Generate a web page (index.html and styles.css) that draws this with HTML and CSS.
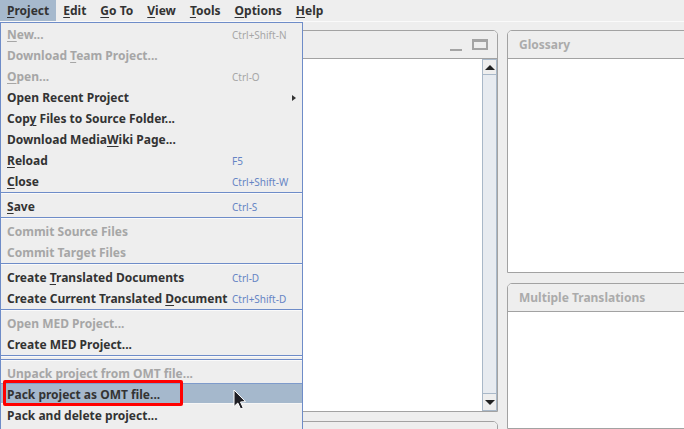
FILE: index.html
```html
<!DOCTYPE html>
<html>
<head>
<meta charset="utf-8">
<title>OmegaT</title>
<link rel="stylesheet" href="styles.css">
</head>
<body>
<div class="app">
  <nav class="menubar">
    <span class="mb-item active"><u>P</u>roject</span>
    <span class="mb-item"><u>E</u>dit</span>
    <span class="mb-item"><u>G</u>o To</span>
    <span class="mb-item"><u>V</u>iew</span>
    <span class="mb-item"><u>T</u>ools</span>
    <span class="mb-item"><u>O</u>ptions</span>
    <span class="mb-item"><u>H</u>elp</span>
  </nav>

  <main class="workspace">
    <div class="col-left">
      <section class="panel editor">
        <header class="panel-head">
          <span class="win-btns">
            <span class="btn-min"></span>
            <span class="btn-max"></span>
          </span>
        </header>
        <div class="panel-body editor-body">
          <div class="editor-text"></div>
          <div class="scrollbar">
            <div class="sb-btn"><span class="tri-up"></span></div>
            <div class="sb-track"></div>
            <div class="sb-btn"><span class="tri-down"></span></div>
          </div>
        </div>
      </section>
      <section class="panel bottom-panel">
        <header class="panel-head"></header>
      </section>
    </div>
    <div class="col-right">
      <section class="panel glossary">
        <header class="panel-head"><span class="panel-title">Glossary</span></header>
        <div class="panel-body"></div>
      </section>
      <section class="panel multi">
        <header class="panel-head"><span class="panel-title">Multiple Translations</span></header>
        <div class="panel-body"></div>
      </section>
    </div>
  </main>

  <div class="popup">
    <div class="mi dis"><span class="lbl"><u>N</u>ew...</span><span class="sc">Ctrl+Shift-N</span></div>
    <div class="mi dis"><span class="lbl">Download <u>T</u>eam Project...</span></div>
    <div class="mi dis"><span class="lbl"><u>O</u>pen...</span><span class="sc">Ctrl-O</span></div>
    <div class="mi"><span class="lbl">Open Recent Project</span><span class="arrow"></span></div>
    <div class="mi"><span class="lbl">Cop<u>y</u> Files to Source Folder...</span></div>
    <div class="mi"><span class="lbl">Download Media<u>W</u>iki Page...</span></div>
    <div class="mi"><span class="lbl"><u>R</u>eload</span><span class="sc">F5</span></div>
    <div class="mi"><span class="lbl"><u>C</u>lose</span><span class="sc">Ctrl+Shift-W</span></div>
    <div class="sep"></div>
    <div class="mi"><span class="lbl"><u>S</u>ave</span><span class="sc">Ctrl-S</span></div>
    <div class="sep"></div>
    <div class="mi dis"><span class="lbl">Commit Source Files</span></div>
    <div class="mi dis"><span class="lbl">Commit Target Files</span></div>
    <div class="sep"></div>
    <div class="mi"><span class="lbl">Create <u>T</u>ranslated Documents</span><span class="sc">Ctrl-D</span></div>
    <div class="mi"><span class="lbl">Create Current Translated <u>D</u>ocument</span><span class="sc">Ctrl+Shift-D</span></div>
    <div class="sep"></div>
    <div class="mi dis"><span class="lbl">Open MED Project...</span></div>
    <div class="mi"><span class="lbl">Create MED Project...</span></div>
    <div class="sep"></div>
    <div class="sep"></div>
    <div class="mi dis"><span class="lbl">Unpack project from OMT file...</span></div>
    <div class="mi hover"><span class="lbl">Pack project as OMT file...</span></div>
    <div class="mi"><span class="lbl">Pack and delete project...</span></div>
    <div class="mi"></div>
  </div>

  <div class="callout"></div>

  <svg class="cursor" width="16" height="22" viewBox="0 0 16 22">
    <path d="M1 1 L1 17.5 L4.8 14 L7.6 20 L10.2 18.8 L7.5 13 L12.5 12.6 Z" fill="#1e1e24" stroke="#ffffff" stroke-width="1" stroke-linejoin="round"/>
  </svg>
</div>
</body>
</html>
```

FILE: styles.css
```css
html, body {
  margin: 0;
  padding: 0;
}

body {
  background: #eeeeee;
  font-family: "Noto Sans", "DejaVu Sans", sans-serif;
  overflow: hidden;
}

.app {
  position: relative;
  width: 684px;
  height: 429px;
  overflow: hidden;
  background: #eeeeee;
}

u {
  text-decoration: underline;
  text-decoration-thickness: 1px;
  text-underline-offset: 2px;
}

/* ---------- menu bar ---------- */
.menubar {
  display: flex;
  height: 21px;
  border-bottom: 1px solid #fafafa;
  font-size: 12px;
  font-weight: 700;
  color: #333333;
}

.mb-item {
  padding: 0 7px;
  line-height: 21px;
}

.mb-item.active {
  background: #a6b9cd;
}

/* ---------- workspace ---------- */
.workspace {
  display: flex;
  gap: 9px;
  padding: 8px 0 0 5px;
  height: 399px;
}

.col-left {
  width: 493px;
  flex: 0 0 493px;
  display: flex;
  flex-direction: column;
  gap: 9px;
}

.col-right {
  flex: 1;
  margin-right: -10px;
  display: flex;
  flex-direction: column;
  gap: 10px;
}

.panel {
  background: #ffffff;
  border: 1px solid #a2a2a2;
  border-radius: 5px 5px 0 0;
  display: flex;
  flex-direction: column;
  box-sizing: border-box;
}

.panel-head {
  height: 27px;
  flex: 0 0 27px;
  background: #eeeeee;
  border-bottom: 1px solid #a2a2a2;
  border-radius: 4px 4px 0 0;
  display: flex;
  align-items: center;
  padding: 0 11px;
}

.panel-title {
  color: #ababab;
  font-size: 12px;
  font-weight: 700;
}

.panel-body {
  flex: 1;
  background: #ffffff;
}

.editor {
  height: 382px;
  flex: 0 0 382px;
}

.bottom-panel {
  flex: 1;
}

.glossary {
  height: 243px;
  flex: 0 0 243px;
}

.multi {
  flex: 1;
}

/* editor header buttons */
.win-btns {
  margin-left: auto;
  margin-right: -2px;
  display: flex;
  align-items: center;
  gap: 10px;
}

.btn-min {
  width: 12px;
  height: 2px;
  background: #a4a4a4;
  margin-top: 10px;
}

.btn-max {
  width: 16px;
  height: 11px;
  box-sizing: border-box;
  border: 2px solid #a4a4a4;
  border-top-width: 3px;
}

/* editor body + scrollbar */
.editor-body {
  display: flex;
}

.editor-text {
  flex: 1;
}

.scrollbar {
  width: 15px;
  display: flex;
  flex-direction: column;
}

.sb-btn {
  height: 16px;
  box-sizing: border-box;
  border: 1px solid #a9b8c8;
  background: #eeeeee;
  display: flex;
  align-items: center;
  justify-content: center;
}

.sb-track {
  flex: 1;
  box-sizing: border-box;
  background: #e7ebf0;
  border-left: 1px solid #a9b8c8;
  border-right: 1px solid #a9b8c8;
}

.scrollbar .sb-btn:last-child {
  height: 18px;
}

.tri-up {
  width: 0;
  height: 0;
  border-left: 5px solid transparent;
  border-right: 5px solid transparent;
  border-bottom: 5px solid #222222;
}

.tri-down {
  width: 0;
  height: 0;
  border-left: 5px solid transparent;
  border-right: 5px solid transparent;
  border-top: 5px solid #222222;
}

/* ---------- popup menu ---------- */
.popup {
  position: absolute;
  top: 22px;
  left: 0;
  width: 301px;
  border: 1px solid #6e8cc8;
  border-bottom: none;
  background: #eeeeee;
  font-size: 12px;
  font-weight: 700;
  color: #333333;
}

.mi {
  height: 21px;
  box-sizing: border-box;
  display: flex;
  align-items: center;
  padding-left: 6px;
  padding-top: 2px;
  white-space: nowrap;
}

.mi .lbl {
  flex: 0 0 225px;
  white-space: nowrap;
}

.mi .sc {
  font-size: 10px;
  font-weight: 400;
  color: #6584c4;
}

.mi.dis,
.mi.dis .sc {
  color: #a6a6a6;
}

.mi.hover {
  background: #a5b8cc;
  border-top: 1px solid #7e9bcb;
  border-bottom: 1px solid #f6f6f6;
  padding-top: 2px;
}

.arrow {
  margin-left: auto;
  margin-right: 6px;
  width: 0;
  height: 0;
  border-top: 3.5px solid transparent;
  border-bottom: 3.5px solid transparent;
  border-left: 4px solid #333333;
}

.sep {
  height: 4px;
  box-sizing: border-box;
  padding-top: 1px;
}

.sep::before {
  content: "";
  display: block;
  height: 1px;
  background: #6e8cc8;
  border-bottom: 1px solid #fafafa;
}

/* ---------- overlays ---------- */
.callout {
  position: absolute;
  left: 3px;
  top: 380px;
  width: 180px;
  height: 26px;
  box-sizing: border-box;
  border: 3px solid #ff0000;
  border-radius: 2px;
}

.cursor {
  position: absolute;
  left: 233px;
  top: 389px;
}
```
